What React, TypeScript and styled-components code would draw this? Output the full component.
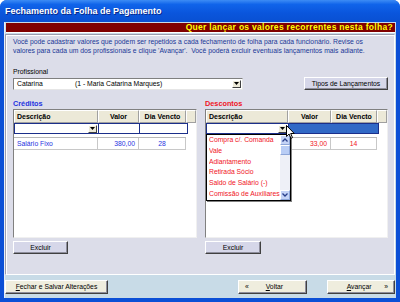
import React from 'react';
import styled, {createGlobalStyle, css} from 'styled-components';

const GlobalStyle = createGlobalStyle`
  html, body {
    margin: 0;
    padding: 0;
    background: #ffffff;
  }
  body {
    font-family: "Liberation Sans", Arial, sans-serif;
    font-size: 7px;
  }
`;

type Row = {desc: string; valor: string; dia: string};

const creditos: Row[] = [{desc: 'Salário Fixo', valor: '380,00', dia: '28'}];
const descontos: Row[] = [{desc: '', valor: '33,00', dia: '14'}];
const tipos = [
  'Compra c/. Comanda',
  'Vale',
  'Adiantamento',
  'Retirada Sócio',
  'Saldo de Salário (-)',
  'Comissão de Auxiliares',
];

const ArrowDown = () => (
  <svg width="5" height="3" viewBox="0 0 5 3">
    <path d="M0 0h5L2.5 3z" fill="#000" />
  </svg>
);

const Chevron = ({up}: {up?: boolean}) => (
  <svg width="6" height="4" viewBox="0 0 6 4">
    <path d={up ? 'M0.5 3.5L3 1l2.5 2.5' : 'M0.5 0.5L3 3l2.5-2.5'} fill="none" stroke="#2a3f8a" strokeWidth="1.3" />
  </svg>
);

const Cursor = () => (
  <svg width="9" height="14" viewBox="0 0 9 14">
    <path d="M0.5 0.5v11l2.6-2.4 1.8 4.2 1.6-0.7-1.8-4.1h3.6z" fill="#fff" stroke="#000" strokeWidth="1" />
  </svg>
);

type GridProps = {
  widths: number[];
  tone: 'blue' | 'red';
  rows: Row[];
  selected?: boolean;
  openList?: boolean;
};

const DataGrid = ({widths, tone, rows, selected, openList}: GridProps) => {
  const cols = widths.map(w => `${w}px`).join(' ');
  const full = `${cols} 1fr`;
  return (
    <GridBox>
      <GridRow $cols={full}>
        <HeadCell>Descrição</HeadCell>
        <HeadCell $align="center">Valor</HeadCell>
        <HeadCell $align="center">Dia Vencto</HeadCell>
        <HeadCell />
      </GridRow>
      <EditRow $cols={cols}>
        <EditCell>
          <span />
          <ComboBtn>
            <ArrowDown />
          </ComboBtn>
        </EditCell>
        <EditCell $selected={selected} />
        <EditCell $selected={selected} />
      </EditRow>
      <Divider $cols={cols} />
      {rows.map((r, i) => (
        <GridRow $cols={cols} key={i}>
          <DataCell $tone={tone}>{r.desc}</DataCell>
          <DataCell $tone={tone} $align="right">{r.valor}</DataCell>
          <DataCell $tone={tone} $align="center">{r.dia}</DataCell>
        </GridRow>
      ))}
      {openList && (
        <DropList>
          <DropItems>
            {tipos.map(t => (
              <DropItem key={t}>{t}</DropItem>
            ))}
          </DropItems>
          <ScrollBar>
            <ScrollBtn>
              <Chevron up />
            </ScrollBtn>
            <ScrollThumb />
            <ScrollTrack />
            <ScrollBtn>
              <Chevron />
            </ScrollBtn>
          </ScrollBar>
        </DropList>
      )}
    </GridBox>
  );
};

export default function App() {
  return (
    <>
      <GlobalStyle />
      <Window>
        <TitleBar>Fechamento da Folha de Pagamento</TitleBar>
        <Body>
          <Banner>Quer lançar os valores recorrentes nesta folha?</Banner>
          <Panel>
            <Intro>
              Você pode cadastrar valores que podem ser repetidos a cada fechamento de folha para cada funcionário. Revise os
              <br />
              valores para cada um dos profissionais e clique 'Avançar'.&nbsp; Você poderá excluir eventuais lançamentos mais adiante.
            </Intro>
            <FieldLabel>Profissional</FieldLabel>
            <ProRow>
              <Combo>
                <ComboName>Catarina</ComboName>
                <ComboText>(1 - Maria Catarina Marques)</ComboText>
                <ComboBtn>
                  <ArrowDown />
                </ComboBtn>
              </Combo>
              <LavButton $w={84}>Tipos de Lançamentos</LavButton>
            </ProRow>
            <Columns>
              <Column $w={184}>
                <SectionTitle $tone="blue">Créditos</SectionTitle>
                <DataGrid widths={[84, 41, 47]} tone="blue" rows={creditos} />
                <LavButton $w={55}>Excluir</LavButton>
              </Column>
              <Column $w={183}>
                <SectionTitle $tone="red">Descontos</SectionTitle>
                <DataGrid widths={[82, 43, 46]} tone="red" rows={descontos} selected openList />
                <LavButton $w={56}>Excluir</LavButton>
              </Column>
            </Columns>
            <CursorSpot>
              <Cursor />
            </CursorSpot>
          </Panel>
          <Footer>
            <BeigeButton $w={103}>
              <u>F</u>echar e Salvar Alterações
            </BeigeButton>
            <FooterRight>
              <BeigeButton $w={69} $spread>
                <span>«</span>
                <span>
                  <u>V</u>oltar
                </span>
                <span />
              </BeigeButton>
              <BeigeButton $w={68} $spread>
                <span />
                <span>
                  <u>A</u>vançar
                </span>
                <span>»</span>
              </BeigeButton>
            </FooterRight>
          </Footer>
        </Body>
      </Window>
    </>
  );
}

const Window = styled.div`
  width: 400px;
  height: 302px;
  display: flex;
  flex-direction: column;
  background: #0b4fd6;
  border-radius: 7px 7px 0 0;
  overflow: hidden;
`;

const TitleBar = styled.div`
  height: 22px;
  flex: none;
  display: flex;
  align-items: center;
  padding-left: 5px;
  color: #fff;
  font-size: 9px;
  font-weight: bold;
  text-shadow: 1px 1px 0 #0a2a8a;
  background: linear-gradient(#3d8cf5 0%, #1064ea 20%, #0a55dc 60%, #0950d2 100%);
`;

const Body = styled.div`
  flex: 1;
  display: flex;
  flex-direction: column;
  margin: 0 4px 4px 4px;
  background: #c8dbe7;
  border-left: 1px solid #e8eef7;
  padding-top: 1px;
`;

const Banner = styled.div`
  height: 9px;
  margin: 0 1px 0 1px;
  background: #800000;
  color: #ffff00;
  font-weight: bold;
  font-size: 8.5px;
  letter-spacing: 0.3px;
  line-height: 9px;
  text-align: right;
  padding-right: 2px;
  border-bottom: 1px solid #fff;
  white-space: nowrap;
`;

const Panel = styled.div`
  position: relative;
  height: 241px;
  flex: none;
  margin: 1px 1px 0 0;
  background: #dcdde9;
  border: 1px solid #9c9cae;
  border-right-color: #fff;
  border-bottom-color: #fff;
  box-shadow: inset 1px 1px 0 #fff;
  padding: 3px 6px 0 7px;
  box-sizing: border-box;
`;

const Intro = styled.p`
  margin: 0;
  color: #1a3897;
  font-size: 6.8px;
  line-height: 8.5px;
  white-space: nowrap;
`;

const FieldLabel = styled.div`
  margin-top: 13px;
  color: #000;
  font-size: 6.8px;
  line-height: 8px;
`;

const ProRow = styled.div`
  display: flex;
  justify-content: space-between;
  align-items: center;
  margin-top: 1px;
`;

const Combo = styled.div`
  width: 230px;
  height: 12px;
  box-sizing: border-box;
  display: flex;
  align-items: center;
  background: #fff;
  border: 1px solid #7f7f7f;
  border-right-color: #e6e6e6;
  border-bottom-color: #e6e6e6;
  padding: 0 1px 0 3px;
  font-size: 6.8px;
`;

const ComboName = styled.span`
  width: 58px;
`;

const ComboText = styled.span`
  flex: 1;
`;

const ComboBtn = styled.div`
  width: 9px;
  height: 8px;
  flex: none;
  display: flex;
  align-items: center;
  justify-content: center;
  background: #ece9d8;
  border: 1px solid #fff;
  border-right-color: #404040;
  border-bottom-color: #404040;
  box-sizing: border-box;
`;

const buttonBase = css<{$w: number}>`
  width: ${p => p.$w}px;
  height: 13px;
  box-sizing: border-box;
  display: flex;
  align-items: center;
  justify-content: center;
  font-size: 6.8px;
  color: #000;
  border: 1px solid #fff;
  border-right-color: #404040;
  border-bottom-color: #404040;
  box-shadow: inset -1px -1px 0 #8e8e9c;
`;

const LavButton = styled.div<{$w: number}>`
  ${buttonBase};
  background: #d6d7e9;
`;

const BeigeButton = styled.div<{$w: number; $spread?: boolean}>`
  ${buttonBase};
  height: 14px;
  background: #efedde;
  justify-content: ${p => (p.$spread ? 'space-between' : 'center')};
  padding: 0 6px;
  u {
    text-decoration: underline;
  }
`;

const Columns = styled.div`
  display: flex;
  justify-content: space-between;
  margin-top: 10px;
`;

const Column = styled.div<{$w: number}>`
  width: ${p => p.$w}px;
  display: flex;
  flex-direction: column;
  gap: 3px;
`;

const SectionTitle = styled.div<{$tone: 'blue' | 'red'}>`
  font-weight: bold;
  font-size: 7.3px;
  line-height: 8px;
  margin-bottom: -2px;
  color: ${p => (p.$tone === 'blue' ? '#1f33e0' : '#f0141e')};
`;

const GridBox = styled.div`
  position: relative;
  height: 129px;
  box-sizing: border-box;
  background: #fff;
  border: 1px solid #808080;
  border-right-color: #f0f0f0;
  border-bottom-color: #f0f0f0;
`;

const GridRow = styled.div<{$cols: string}>`
  display: grid;
  grid-template-columns: ${p => p.$cols};
`;

const HeadCell = styled.div<{$align?: string}>`
  height: 13px;
  box-sizing: border-box;
  background: #ece9d8;
  border: 1px solid #fff;
  border-right-color: #a0a0a0;
  border-bottom-color: #a0a0a0;
  padding: 0 2px;
  font-weight: bold;
  font-size: 7px;
  line-height: 11px;
  text-align: ${p => p.$align || 'left'};
`;

const EditRow = styled.div<{$cols: string}>`
  display: grid;
  grid-template-columns: ${p => p.$cols};
  width: max-content;
  border: 1px solid #1b2f8a;
  height: 11px;
  box-sizing: border-box;
`;

const EditCell = styled.div<{$selected?: boolean}>`
  display: flex;
  justify-content: space-between;
  align-items: center;
  padding-right: 1px;
  background: ${p => (p.$selected ? '#3169c6' : '#fff')};
  border-right: 1px solid ${p => (p.$selected ? '#3169c6' : '#1b2f8a')};
  &:last-child {
    border-right: none;
  }
`;

const Divider = styled.div<{$cols: string}>`
  display: grid;
  grid-template-columns: ${p => p.$cols};
  width: max-content;
  height: 4px;
  box-sizing: border-box;
  border-bottom: 1px solid #b8b8b8;
  border-top: 1px solid #fff;
`;

const DataCell = styled.div<{$tone: 'blue' | 'red'; $align?: string}>`
  height: 12px;
  box-sizing: border-box;
  border-right: 1px solid #c8c8c8;
  border-bottom: 1px solid #c8c8c8;
  padding: 0 3px;
  line-height: 11px;
  font-size: 6.8px;
  color: ${p => (p.$tone === 'blue' ? '#1f33e0' : '#f0141e')};
  text-align: ${p => p.$align || 'left'};
`;

const DropList = styled.div`
  position: absolute;
  left: 0;
  top: 24px;
  width: 85px;
  height: 67px;
  display: flex;
  box-sizing: border-box;
  background: #fff;
  border: 1px solid #000;
  box-shadow: 1px 1px 0 #808080;
`;

const DropItems = styled.div`
  flex: 1;
  display: flex;
  flex-direction: column;
  padding: 0 0 0 2px;
`;

const DropItem = styled.div`
  height: 10.8px;
  line-height: 10.8px;
  font-size: 6.8px;
  color: #f0141e;
  white-space: nowrap;
  overflow: hidden;
`;

const ScrollBar = styled.div`
  width: 10px;
  display: flex;
  flex-direction: column;
  background: #eef0f7;
`;

const ScrollBtn = styled.div`
  height: 10px;
  box-sizing: border-box;
  display: flex;
  align-items: center;
  justify-content: center;
  background: #c4d3f6;
  border: 1px solid #fff;
  border-right-color: #8ea6d8;
  border-bottom-color: #8ea6d8;
`;

const ScrollThumb = styled.div`
  height: 10px;
  background: #b9cdf5;
  border: 1px solid #fff;
  border-right-color: #8ea6d8;
  border-bottom-color: #8ea6d8;
  box-sizing: border-box;
`;

const ScrollTrack = styled.div`
  flex: 1;
`;

const CursorSpot = styled.div`
  position: absolute;
  left: 280px;
  top: 90px;
  line-height: 0;
`;

const Footer = styled.div`
  flex: 1;
  display: flex;
  align-items: center;
  justify-content: space-between;
  padding: 0 1px 0 0;
`;

const FooterRight = styled.div`
  display: flex;
  gap: 20px;
`;
